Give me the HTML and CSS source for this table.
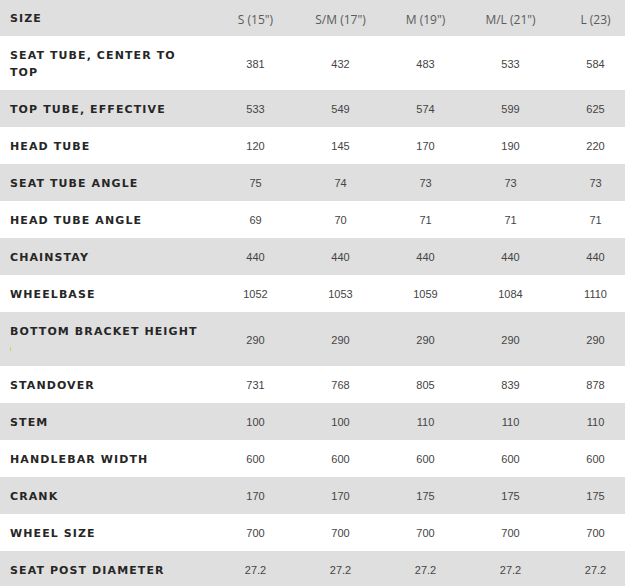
FILE: index.html
```html
<!DOCTYPE html>
<html>
<head>
<meta charset="utf-8">
<link rel="stylesheet" href="styles.css">
</head>
<body>
<div class="table">
  <div class="row head gray">
    <div class="label">SIZE</div>
    <div class="cell">S (15")</div><div class="cell">S/M (17")</div><div class="cell">M (19")</div><div class="cell">M/L (21")</div><div class="cell last">L (23)</div>
  </div>
  <div class="row">
    <div class="label">SEAT TUBE, CENTER TO<br>TOP</div>
    <div class="cell">381</div><div class="cell">432</div><div class="cell">483</div><div class="cell">533</div><div class="cell last">584</div>
  </div>
  <div class="row gray">
    <div class="label">TOP TUBE, EFFECTIVE</div>
    <div class="cell">533</div><div class="cell">549</div><div class="cell">574</div><div class="cell">599</div><div class="cell last">625</div>
  </div>
  <div class="row">
    <div class="label">HEAD TUBE</div>
    <div class="cell">120</div><div class="cell">145</div><div class="cell">170</div><div class="cell">190</div><div class="cell last">220</div>
  </div>
  <div class="row gray">
    <div class="label">SEAT TUBE ANGLE</div>
    <div class="cell">75</div><div class="cell">74</div><div class="cell">73</div><div class="cell">73</div><div class="cell last">73</div>
  </div>
  <div class="row">
    <div class="label">HEAD TUBE ANGLE</div>
    <div class="cell">69</div><div class="cell">70</div><div class="cell">71</div><div class="cell">71</div><div class="cell last">71</div>
  </div>
  <div class="row gray">
    <div class="label">CHAINSTAY</div>
    <div class="cell">440</div><div class="cell">440</div><div class="cell">440</div><div class="cell">440</div><div class="cell last">440</div>
  </div>
  <div class="row">
    <div class="label">WHEELBASE</div>
    <div class="cell">1052</div><div class="cell">1053</div><div class="cell">1059</div><div class="cell">1084</div><div class="cell last">1110</div>
  </div>
  <div class="row gray">
    <div class="label">BOTTOM BRACKET HEIGHT<br><span class="mark"></span></div>
    <div class="cell">290</div><div class="cell">290</div><div class="cell">290</div><div class="cell">290</div><div class="cell last">290</div>
  </div>
  <div class="row">
    <div class="label">STANDOVER</div>
    <div class="cell">731</div><div class="cell">768</div><div class="cell">805</div><div class="cell">839</div><div class="cell last">878</div>
  </div>
  <div class="row gray">
    <div class="label">STEM</div>
    <div class="cell">100</div><div class="cell">100</div><div class="cell">110</div><div class="cell">110</div><div class="cell last">110</div>
  </div>
  <div class="row">
    <div class="label">HANDLEBAR WIDTH</div>
    <div class="cell">600</div><div class="cell">600</div><div class="cell">600</div><div class="cell">600</div><div class="cell last">600</div>
  </div>
  <div class="row gray">
    <div class="label">CRANK</div>
    <div class="cell">170</div><div class="cell">170</div><div class="cell">175</div><div class="cell">175</div><div class="cell last">175</div>
  </div>
  <div class="row">
    <div class="label">WHEEL SIZE</div>
    <div class="cell">700</div><div class="cell">700</div><div class="cell">700</div><div class="cell">700</div><div class="cell last">700</div>
  </div>
  <div class="row gray">
    <div class="label">SEAT POST DIAMETER</div>
    <div class="cell">27.2</div><div class="cell">27.2</div><div class="cell">27.2</div><div class="cell">27.2</div><div class="cell last">27.2</div>
  </div>
</div>
</body>
</html>
```
FILE: styles.css
```css
html, body {
  margin: 0;
  padding: 0;
  background: #ffffff;
  overflow: hidden;
}
.table {
  width: 625px;
  display: flex;
  flex-direction: column;
}
.row {
  display: grid;
  grid-template-columns: 213px 85px 85px 85px 85px 72px;
  align-items: center;
  background: #ffffff;
}
.row.gray {
  background: #dfdfdf;
}
.label {
  padding: 11px 0 9px 10px;
  font-family: "DejaVu Sans", sans-serif;
  font-weight: bold;
  font-size: 11px;
  letter-spacing: 1.1px;
  line-height: 17px;
  color: #262626;
}
.head .label {
  padding-top: 10px;
}
.cell {
  padding-top: 2px;
  text-align: center;
  font-family: "Liberation Sans", Arial, sans-serif;
  font-size: 11px;
  color: #444444;
  line-height: 17px;
}
.cell.last {
  padding-left: 13px;
}
.head .cell {
  font-family: "Open Sans", sans-serif;
  font-size: 12px;
  color: #5a5a5a;
}
.mark {
  display: inline-block;
  width: 1px;
  height: 4px;
  background: #d8d24a;
  vertical-align: middle;
}
```
